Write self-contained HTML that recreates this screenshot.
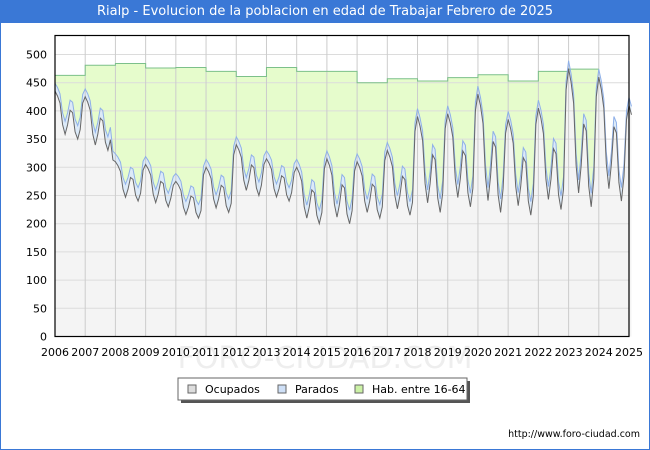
<!DOCTYPE html>
<html><head><meta charset="utf-8"><style>
body{margin:0;width:650px;height:450px;overflow:hidden;font-family:"DejaVu Sans","Liberation Sans",sans-serif;background:#fff}
.wrap{position:absolute;left:0;top:0;width:648px;height:449px;border:1px solid #3a78d6;border-top:none}
.title{position:absolute;left:0;top:0;width:650px;height:23px;background:#3a78d6;color:#fff;font-size:13px;text-align:center;line-height:23px}
svg{position:absolute;left:0;top:0}
</style></head><body>
<div class="wrap"></div>
<div class="title">Rialp - Evolucion de la poblacion en edad de Trabajar Febrero de 2025</div>
<svg width="650" height="450" id="s" font-family="DejaVu Sans, Liberation Sans, sans-serif" font-size="11">
<text x="325" y="368" font-size="30" fill="#eeeeee" text-anchor="middle">FORO-CIUDAD.COM</text>
<g id="g"></g>
<rect x="55" y="35.5" width="574" height="301" fill="none" stroke="#000" stroke-width="1.2"/>
<rect x="181" y="381" width="289" height="22" fill="#555"/>
<rect x="178" y="378" width="289" height="22" fill="#fff" stroke="#666"/>
<rect x="188" y="385" width="8" height="8" fill="#ddd" stroke="#666"/>
<text x="205" y="393">Ocupados</text>
<rect x="278" y="385" width="8" height="8" fill="#cfe0f7" stroke="#666"/>
<text x="295" y="393">Parados</text>
<rect x="355" y="385" width="8" height="8" fill="#ccf2a6" stroke="#666"/>
<text x="372" y="393">Hab. entre 16-64</text>
<text x="640" y="437" font-size="9.5" text-anchor="end">http://www.foro-ciudad.com</text>
</svg>
<script>
var g=document.getElementById('g'),h='';
var X0=55,W=574/19,Y0=336.5,K=0.564;
function X(t){return X0+t*W}function Y(v){return Y0-v*K}
h+='<rect x="55" y="35.5" width="574" height="301" fill="#ffffff"/>';
var hab=[463,481,484,476,477,470,461,477,470,470,450,457,453,459,464,453,470,474];
var pk=[435,425,310,305,275,300,340,315,300,315,310,330,390,395,430,385,405,475,460,410];
var tr=[350,330,240,230,210,220,250,240,200,200,210,215,220,230,220,215,225,230,240,240];
var oc=[],pa=[];
for(var i=0;i<=229;i++){var y=Math.floor(i/12),m=i%12;
var f=[1,.9,.75,.3,.1,.3,.6,.55,.15,.0,.2,.85][m];
var v=tr[y]+(pk[y]-tr[y])*f;if(m==11)v=tr[y]+(pk[y+1]-tr[y])*.85;
oc.push(v);pa.push(v+14+10*(1-f));}
var n=hab.length;
var p='M55,'+Y(0);for(var y=0;y<n;y++){p+=' L'+X(y)+','+Y(hab[y])+' L'+X(y+1)+','+Y(hab[y]);}
p+=' L'+X(n)+','+Y(0)+'Z';
h+='<path d="'+p+'" fill="#e6fccc"/>';
function line(a,c,fill){var s='M'+X(0)+','+Y(a[0]);for(var i=1;i<a.length;i++)s+=' L'+X(i/12).toFixed(1)+','+Y(a[i]).toFixed(1);
if(fill)return '<path d="'+s+' L'+X(229/12)+','+Y(0)+' L55,'+Y(0)+'Z" fill="'+fill+'"/>';return '<path d="'+s+'" fill="none" stroke="'+c+'" stroke-width="1"/>';}
h+=line(pa,0,'#dceaf8');h+=line(oc,0,'#f4f4f4');
for(var v=50;v<=500;v+=50)h+='<line x1="55" x2="629" y1="'+Y(v)+'" y2="'+Y(v)+'" stroke="#dcdcdc"/>';
for(var y=1;y<19;y++)h+='<line y1="35" y2="336" x1="'+X(y)+'" x2="'+X(y)+'" stroke="#cccccc"/>';
var hp='M55,'+Y(hab[0]);for(var y=0;y<n;y++){hp+=' L'+X(y)+','+Y(hab[y])+' L'+X(y+1)+','+Y(hab[y]);}
h+='<path d="'+hp+'" fill="none" stroke="#7cc08a"/>';
h+=line(pa,'#8fb0e8');h+=line(oc,'#666');
for(var v=0;v<=500;v+=50)h+='<text x="47" y="'+(Y(v)+4)+'" text-anchor="end">'+v+'</text>';
for(var y=0;y<=19;y++)h+='<text x="'+X(y)+'" y="356" text-anchor="middle">'+(2006+y)+'</text>';
g.innerHTML=h;
</script>
</body></html>
